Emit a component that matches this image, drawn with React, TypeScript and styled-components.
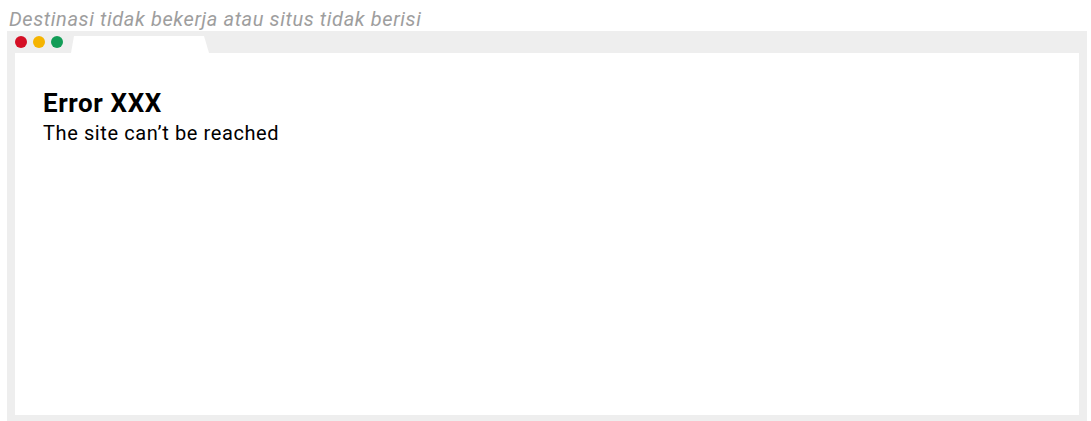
import styled, {createGlobalStyle} from 'styled-components'

const GlobalStyle = createGlobalStyle`
  html, body {
    margin: 0;
    padding: 0;
    background: #ffffff;
  }
  body {
    font-family: Roboto, "Liberation Sans", sans-serif;
  }
`

const Page = styled.div`
  width: 1091px;
  height: 421px;
  padding: 7px 4px 0 7px;
  box-sizing: border-box;
  display: flex;
  flex-direction: column;
`

const Caption = styled.div`
  font-size: 20px;
  font-style: italic;
  line-height: 24px;
  letter-spacing: 0.6px;
  color: #9e9e9e;
  padding-left: 2px;
`

const Frame = styled.div`
  flex: 1;
  width: 1080px;
  background: #eeeeee;
  padding: 0 8px 6px;
  box-sizing: border-box;
  display: flex;
  flex-direction: column;
`

const TabBar = styled.div`
  height: 22px;
  display: flex;
  align-items: flex-end;
`

const Dots = styled.div`
  display: flex;
  gap: 6px;
  align-self: center;
`

const Dot = styled.span<{$color: string}>`
  width: 12px;
  height: 12px;
  border-radius: 50%;
  background: ${p => p.$color};
`

const Tab = styled.div`
  width: 138px;
  height: 17px;
  margin-left: 8px;
  background: #ffffff;
  clip-path: polygon(3px 0, 133px 0, 138px 100%, 0 100%);
`

const Viewport = styled.div`
  flex: 1;
  background: #ffffff;
  padding: 35px 28px;
`

const Title = styled.h1`
  margin: 0;
  font-size: 26px;
  font-weight: 700;
  line-height: 30px;
  letter-spacing: 0.6px;
  color: #000000;
`

const Subtitle = styled.p`
  margin: 0;
  font-size: 20px;
  line-height: 30px;
  letter-spacing: 0.6px;
  color: #000000;
`

export default function App() {
  return (
    <>
      <GlobalStyle />
      <Page>
        <Caption>Destinasi tidak bekerja atau situs tidak berisi</Caption>
        <Frame>
          <TabBar>
            <Dots>
              <Dot $color="#d50f25" />
              <Dot $color="#f5b400" />
              <Dot $color="#129d57" />
            </Dots>
            <Tab />
          </TabBar>
          <Viewport>
            <Title>Error XXX</Title>
            <Subtitle>The site can’t be reached</Subtitle>
          </Viewport>
        </Frame>
      </Page>
    </>
  )
}
